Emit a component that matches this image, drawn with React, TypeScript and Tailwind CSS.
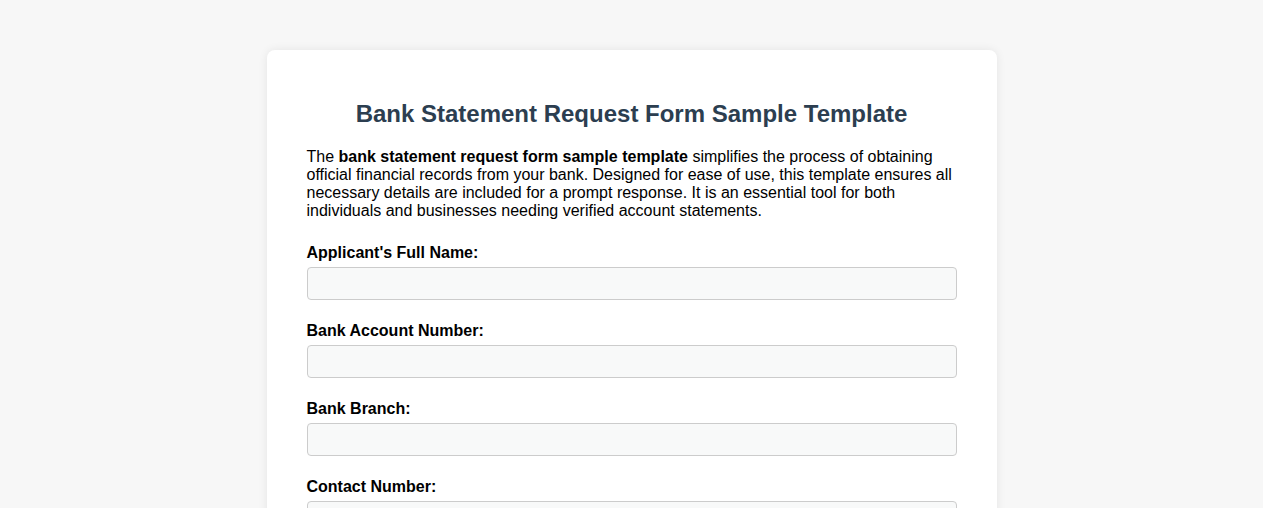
import React from 'react';

const fields = [
  "Applicant's Full Name:",
  'Bank Account Number:',
  'Bank Branch:',
  'Contact Number:',
];

export default function App() {
  return (
    <div className="min-h-screen bg-[#f7f7f7] pt-[50px] pb-10 font-['Liberation_Sans',Arial,sans-serif] text-black">
      <div className="mx-auto w-[730px] rounded-lg bg-white px-10 pt-[50px] pb-10 shadow-[0_0_10px_rgba(0,0,0,0.08)]">
        {/* Titre */}
        <h1 className="mb-5 text-center text-[24px] leading-[28px] font-bold text-[#2c3e50]">
          Bank Statement Request Form Sample Template
        </h1>

        {/* Description */}
        <p className="mb-6 text-[16px] leading-[18px]">
          The <strong>bank statement request form sample template</strong> simplifies the process of obtaining
          official financial records from your bank. Designed for ease of use, this template ensures all
          necessary details are included for a prompt response. It is an essential tool for both
          individuals and businesses needing verified account statements.
        </p>

        {/* Champs du formulaire */}
        <form>
          {fields.map((label) => (
            <div key={label} className="mb-[22px]">
              <label className="mb-[5px] block text-[16px] leading-[18px] font-bold">{label}</label>
              <input
                type="text"
                className="block h-[33px] w-full rounded border border-[#ccc] bg-[#f8f9f9] px-2 text-[16px]"
              />
            </div>
          ))}
        </form>
      </div>
    </div>
  );
}
